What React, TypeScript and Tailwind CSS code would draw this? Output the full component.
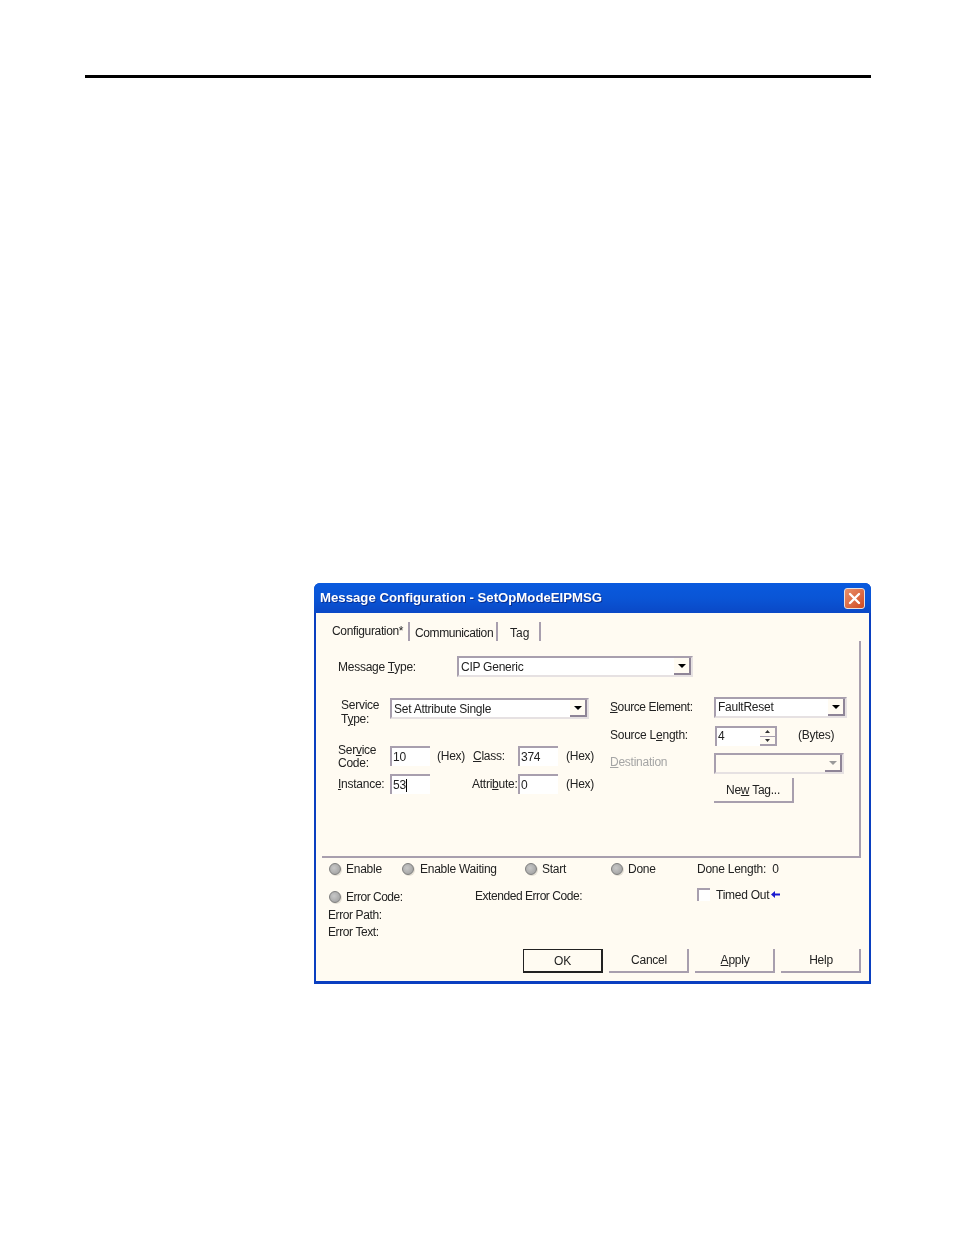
import React from 'react';

// sunken edit box
const Field = ({ w, h = 'h-[20px]', children }: { w: string; h?: string; children?: React.ReactNode }) => (
    <div className={`${w} ${h} shrink-0 border-t-2 border-l-2 border-t-[#a89fae] border-l-[#a89fae] bg-white pl-[1px] leading-[18px] text-[#222]`}>{children}</div>
);

const Arrow = ({ color = '#000' }: { color?: string }) => (
    <svg width="8" height="4" viewBox="0 0 8 4"><path d="M0 0H8L4 4Z" fill={color} /></svg>
);

// combo box with drop-down button on the right
const Combo = ({ w, h, text, disabled, textClass = 'leading-[18px]' }: { w: string; h: string; text?: string; disabled?: boolean; textClass?: string }) => (
    <div className={`${w} ${h} shrink-0 flex border-2 border-[#a89fae] border-b-[#e6e1e2] border-r-[#e6e1e2] ${disabled ? 'bg-[#fffbf2]' : 'bg-white'}`}>
        <div className={`flex-1 pl-[2px] text-[#222] ${textClass}`}>{text}</div>
        <div className="w-[17px] flex items-center justify-center bg-[#fffbf2] border-r-2 border-b-2 border-[#8f8597]">
            <Arrow color={disabled ? '#9a9a9a' : '#000'} />
        </div>
    </div>
);

const Led = () => (
    <span className="w-[12px] h-[12px] shrink-0 rounded-full border border-[#7d7d7d] bg-[radial-gradient(circle_at_40%_40%,#c8c8c8,#9a9a9a)] shadow-[1px_1px_0_#e5e0d5]" />
);

const Btn = ({ w, primary, children }: { w: string; primary?: boolean; children: React.ReactNode }) => (
    <div className={`${w} h-[24px] flex items-center justify-center text-[#222] ${primary ? 'border border-[#222] border-b-2 border-r-2' : 'pl-[2px] border-r-2 border-b-2 border-[#a89fae]'}`}>{children}</div>
);

const TabSep = () => <span className="w-[2px] h-[19px] bg-[#a89fae]" />;

export default function App() {
    return (
        <div className="w-[954px] h-[1235px] bg-white pt-[75px] overflow-hidden font-['Liberation_Sans',sans-serif] text-[12px] tracking-[-0.25px] text-[#222]">
            <div className="ml-[85px] w-[786px] h-[3px] bg-black" />

            <div className="ml-[314px] mt-[505px] w-[557px] h-[401px] rounded-t-[6px] bg-[#0a3fc0] flex flex-col blur-[0.3px]">
                {/* title bar */}
                <div className="h-[30px] shrink-0 flex items-center pl-[6px] pr-[6px] rounded-t-[6px] bg-gradient-to-b from-[#0a5ade] via-[#0a55d6] to-[#0a48c6]">
                    <span className="flex-1 text-white font-bold text-[13.2px] tracking-normal leading-none [text-shadow:1px_1px_0_#0a2f90]">Message Configuration - SetOpModeEIPMSG</span>
                    <div className="w-[21px] h-[21px] rounded-[3px] border border-[#e8e0e0] bg-gradient-to-br from-[#e8906a] to-[#d0481e] flex items-center justify-center">
                        <svg width="13" height="13" viewBox="0 0 13 13"><path d="M2 2L11 11M11 2L2 11" stroke="#fff" strokeWidth="2.4" strokeLinecap="round" /></svg>
                    </div>
                </div>

                {/* dialog body */}
                <div className="flex-1 mx-[2px] mb-[3px] bg-[#fffbf2] flex flex-col pl-[6px] pr-[8px]">
                    {/* tabs */}
                    <div className="h-[19px] mt-[9px] shrink-0 flex items-center pl-[10px]">
                        <span className="w-[76px] -mt-[1px] tracking-[-0.35px]">Configuration*</span>
                        <TabSep />
                        <span className="w-[86px] pl-[5px] mt-[2px] tracking-[-0.4px]">Communication</span>
                        <TabSep />
                        <span className="w-[41px] pl-[12px] mt-[2px] tracking-normal">Tag</span>
                        <TabSep />
                    </div>

                    <div className="h-[217px] shrink-0 border-r-2 border-b-2 border-[#a89fae] flex flex-col">
                        <div className="h-[21px] mt-[15px] flex items-center pl-[16px]">
                            <span className="w-[119px] mt-[1px]">Message <u>T</u>ype:</span>
                            <Combo w="w-[236px]" h="h-[21px]" text="CIP Generic" />
                        </div>

                        <div className="mt-[20px] flex">
                            {/* left column */}
                            <div className="w-[288px] shrink-0 pl-[16px]">
                                <div className="h-[22px] flex items-start mt-[1px]">
                                    <span className="w-[52px] pl-[3px] leading-[14px]">Service<br />T<u>y</u>pe:</span>
                                    <Combo w="w-[199px]" h="h-[21px]" text="Set Attribute Single" />
                                </div>
                                <div className="h-[20px] mt-[26px] flex items-center">
                                    <span className="w-[52px] leading-[13px] mt-[1px]">Ser<u>v</u>ice<br />Code:</span>
                                    <Field w="w-[40px]">10</Field>
                                    <span className="w-[43px] pl-[7px] -mt-[1px]">(Hex)</span>
                                    <span className="w-[45px] -mt-[1px]"><u>C</u>lass:</span>
                                    <Field w="w-[40px]">374</Field>
                                    <span className="pl-[8px] -mt-[1px]">(Hex)</span>
                                </div>
                                <div className="h-[20px] mt-[8px] flex items-center">
                                    <span className="w-[52px] -mt-[1px]"><u>I</u>nstance:</span>
                                    <Field w="w-[40px]">53<span className="inline-block w-[1px] h-[13px] bg-black align-middle" /></Field>
                                    <span className="w-[42px]" />
                                    <span className="w-[46px] -mt-[1px]">Attri<u>b</u>ute:</span>
                                    <Field w="w-[40px]">0</Field>
                                    <span className="pl-[8px] -mt-[1px]">(Hex)</span>
                                </div>
                            </div>

                            {/* right column */}
                            <div className="flex-1">
                                <div className="h-[21px] flex items-center">
                                    <span className="w-[104px] -mt-[2px] tracking-[-0.4px]"><u>S</u>ource Element:</span>
                                    <Combo w="w-[133px]" h="h-[21px]" text="FaultReset" textClass="leading-[16px]" />
                                </div>
                                <div className="h-[20px] mt-[8px] flex items-center">
                                    <span className="w-[105px] -mt-[3px]">Source L<u>e</u>ngth:</span>
                                    <div className="w-[62px] h-[20px] flex border-t-2 border-l-2 border-[#a89fae] bg-white pl-[1px] leading-[17px]">
                                        <span className="flex-1">4</span>
                                        <div className="w-[17px] flex flex-col bg-[#fffbf2] border-r-2 border-b-2 border-[#a89fae]">
                                            <div className="flex-1 flex items-center justify-center border-b border-[#a89fae]">
                                                <svg width="5" height="3" viewBox="0 0 5 3"><path d="M0 3H5L2.5 0Z" fill="#333" /></svg>
                                            </div>
                                            <div className="flex-1 flex items-center justify-center">
                                                <svg width="5" height="3" viewBox="0 0 5 3"><path d="M0 0H5L2.5 3Z" fill="#333" /></svg>
                                            </div>
                                        </div>
                                    </div>
                                    <span className="pl-[21px] -mt-[3px]">(Bytes)</span>
                                </div>
                                <div className="h-[21px] mt-[7px] flex items-center text-[#a5a5a5]">
                                    <span className="w-[104px] -mt-[4px]"><u>D</u>estination</span>
                                    <Combo w="w-[130px]" h="h-[21px]" disabled />
                                </div>
                                <div className="mt-[4px] ml-[104px] w-[80px] h-[25px] flex items-center justify-center border-r-2 border-b-2 border-[#a89fae]">
                                    <span className="mt-[1px]">Ne<u>w</u> Tag...</span>
                                </div>
                            </div>
                        </div>
                    </div>

                    {/* status lights */}
                    <div className="h-[18px] mt-[2px] flex items-center pl-[7px]">
                        <div className="w-[73px] flex items-center gap-[5px]"><Led />Enable</div>
                        <div className="w-[123px] flex items-center gap-[6px]"><Led />Enable Waiting</div>
                        <div className="w-[86px] flex items-center gap-[5px]"><Led />Start</div>
                        <div className="w-[86px] flex items-center gap-[5px]"><Led />Done</div>
                        <span>Done Length:&nbsp;&nbsp;0</span>
                    </div>
                    <div className="h-[18px] mt-[9px] flex items-center pl-[7px]">
                        <div className="w-[146px] flex items-center gap-[5px] mt-[1px] tracking-[-0.5px]"><Led />Error Code:</div>
                        <span className="w-[222px] -mt-[1px] tracking-[-0.45px]">Extended Error Code:</span>
                        <span className="w-[13px] h-[13px] border-t-2 border-l-2 border-[#a89fae] bg-white -mt-[3px]" />
                        <span className="pl-[6px] -mt-[3px]">Timed Out</span>
                        <svg className="ml-[2px] -mt-[3px]" width="9" height="7" viewBox="0 0 9 7"><path d="M4 0L0 3.5L4 7V4.5H9V2.5H4Z" fill="#1a1ad0" /></svg>
                    </div>
                    <div className="mt-[2px] pl-[6px] leading-[17px] tracking-[-0.4px]">
                        <div>Error Path:</div>
                        <div>Error Text:</div>
                    </div>

                    {/* buttons */}
                    <div className="mt-[8px] flex justify-end gap-[6px]">
                        <Btn w="w-[80px]" primary>OK</Btn>
                        <Btn w="w-[80px]">Cancel</Btn>
                        <Btn w="w-[80px]"><span><u>A</u>pply</span></Btn>
                        <Btn w="w-[80px]">Help</Btn>
                    </div>
                </div>
            </div>
        </div>
    );
}
